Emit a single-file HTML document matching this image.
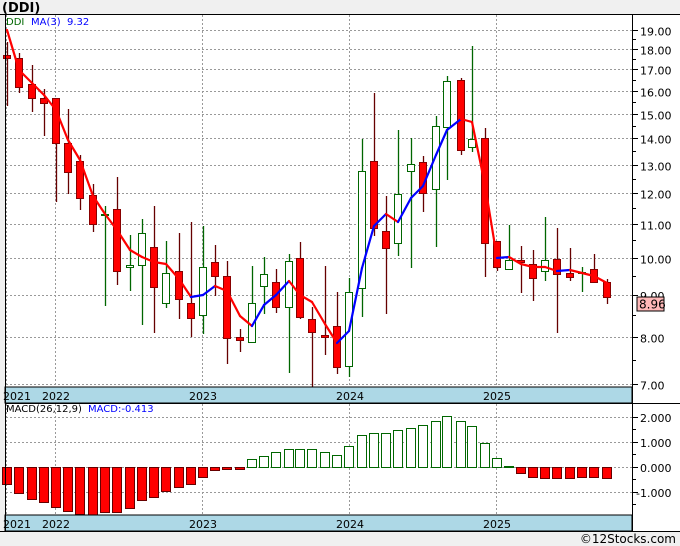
<!DOCTYPE html>
<html><head><meta charset="utf-8"><style>
html,body{margin:0;padding:0;background:#f0f0f0;width:680px;height:546px;overflow:hidden}
svg{display:block}
text{font-family:"DejaVu Sans","Liberation Sans",sans-serif;font-size:11px}
</style></head><body>
<svg id="s" width="680" height="546" xmlns="http://www.w3.org/2000/svg">
<rect x="0" y="0" width="680" height="546" fill="#f0f0f0"/>
<text x="2" y="12" style="font-size:13px;font-weight:bold;font-family:'DejaVu Sans',sans-serif" fill="#000">(DDI)</text>
<rect x="5" y="14" width="675" height="518" fill="#fff"/>
<g id="grid" stroke="#999" stroke-width="1" stroke-dasharray="2,2"></g>
<g id="candles"></g>
<g id="ma" fill="none" stroke-width="2.2"></g>
<g id="macd"></g>
<rect x="5" y="387" width="627" height="16" fill="#add8e6" stroke="#000"/>
<rect x="5" y="515" width="627" height="16" fill="#add8e6" stroke="#000"/>
<line x1="0" y1="14.5" x2="680" y2="14.5" stroke="#000"/>
<line x1="5" y1="403.5" x2="680" y2="403.5" stroke="#000"/>
<line x1="0" y1="531.5" x2="680" y2="531.5" stroke="#000"/>
<line x1="5.5" y1="14" x2="5.5" y2="532" stroke="#000"/>
<line x1="632.5" y1="14" x2="632.5" y2="532" stroke="#000"/>
<g fill="#000" style="font-size:12px">
<text x="3" y="400">2021</text><text x="42" y="400">2022</text><text x="189" y="400">2023</text><text x="336" y="400">2024</text><text x="483" y="400">2025</text>
<text x="3" y="528">2021</text><text x="42" y="528">2022</text><text x="189" y="528">2023</text><text x="336" y="528">2024</text><text x="483" y="528">2025</text>
</g>
<text x="6" y="25" fill="#060" style="font-size:10px">DDI</text>
<text x="31" y="25" fill="#00f" style="font-size:10px">MA(3)</text>
<text x="67" y="25" fill="#00f" style="font-size:10px">9.32</text>
<text x="6" y="412" fill="#000" style="font-size:10px">MACD(26,12,9)</text>
<text x="88" y="412" fill="#00f" style="font-size:10px">MACD:-0.413</text>
<g id="axis" fill="#000" style="font-size:12px"></g>
<rect x="637" y="297" width="27" height="14" fill="#ffb8b8" stroke="#000"/>
<text x="639" y="308.5" fill="#000" style="font-size:12px">8.96</text>
<text x="676" y="543" text-anchor="end" fill="#000" style="font-size:12px">©12Stocks.com</text>
</svg>
<script>
var NS="http://www.w3.org/2000/svg";
function el(p,t,a){var e=document.createElementNS(NS,t);for(var k in a)e.setAttribute(k,a[k]);document.getElementById(p).appendChild(e);return e;}
function py(p){return 30+(Math.log(19)-Math.log(p))*354.7;}
// price grid + axis
for(var p=7;p<=19;p++){var y=Math.round(py(p))+0.5;
 el('grid','line',{x1:6,y1:y,x2:632,y2:y});
 el('axis','line',{x1:632,y1:y,x2:638,y2:y,stroke:'#000'});
 if(p!=9){var t=el('axis','text',{x:640,y:y+5});t.textContent=p.toFixed(2);}
 var ym=Math.round(py(p+0.5))+0.5; if(p<19) el('axis','line',{x1:632,y1:ym,x2:636,y2:ym,stroke:'#000'});
}
var t9=el('axis','text',{x:640,y:Math.round(py(9))+5});t9.textContent='9.00';
// macd grid
[417,442,467,492].forEach(function(y,i){el('grid','line',{x1:6,y1:y+.5,x2:632,y2:y+.5});
 el('axis','line',{x1:632,y1:y+.5,x2:638,y2:y+.5,stroke:'#000'});
 var t=el('axis','text',{x:i==3?636:640,y:y+5});t.textContent=['2.000','1.000','0.000','-1.000'][i];});
[429,454,479,504].forEach(function(y){el('axis','line',{x1:632,y1:y+.5,x2:636,y2:y+.5,stroke:'#000'});});
[6,55,202,349,496].forEach(function(x){el('grid','line',{x1:x+.5,y1:15,x2:x+.5,y2:387});el('grid','line',{x1:x+.5,y1:404,x2:x+.5,y2:515});});
// candles: x, bodyTop, bodyBot, wickTop, wickBot, green?
var C=[[7,55,58,42,106,0],[19,58,87,53,93,0],[32,84,98,65,112,0],[44,98,103,89,136,0],[56,98,143,98,202,0],[68,143,172,109,194,0],[80,161,198,155,210,0],[93,195,224,184,232,0],[105,214,215,206,306,1],[117,209,271,177,285,0],[130,265,267,235,291,1],[142,233,265,219,325,1],[154,247,287,206,333,0],[166,273,303,241,308,1],[179,271,299,233,319,0],[191,303,318,222,337,0],[203,267,315,226,334,1],[215,262,276,245,296,0],[227,276,338,261,364,0],[240,337,340,329,352,0],[252,303,342,266,342,1],[264,274,286,257,314,1],[276,282,307,269,313,0],[289,261,307,254,373,1],[300,258,317,242,319,0],[312,319,332,307,387,0],[325,335,337,266,355,0],[337,326,367,292,374,0],[349,292,366,278,377,1],[362,171,288,139,317,1],[374,161,228,93,236,0],[386,231,248,196,314,0],[398,194,243,130,256,1],[411,164,171,138,268,1],[423,162,193,156,212,0],[436,126,189,116,247,1],[447,81,127,76,180,1],[461,80,150,78,155,0],[472,139,147,46,152,1],[485,138,243,128,277,0],[497,241,267,241,271,0],[509,260,269,225,269,1],[521,260,262,246,293,0],[533,264,278,250,301,0],[545,260,271,217,281,1],[557,259,274,228,333,0],[570,273,277,248,281,0],[582,272,273,267,292,1],[594,269,282,254,282,0],[607,282,297,279,304,0]];
C.forEach(function(c){var col=c[5]?'#060':'#600';
 el('candles','line',{x1:c[0]+.5,y1:c[3],x2:c[0]+.5,y2:c[4],stroke:c[5]?'#060':'#600','stroke-width':1.3});
 var h=Math.max(1,c[2]-c[1]);
 el('candles','rect',{x:c[0]-3.5,y:c[1]+.5,width:7,height:h,fill:c[5]?'#fff':'#f00',stroke:c[5]?'#060':'#800'});
});
var M=[30,70,83,95,110,140,160,196,214,230,250,257,262,264,279,297,295,286,291,316,326,305,295,281,295,302,324,343,331,268,226,214,222,198,186,155,130,119,122,185,258,257,264,267,267,271,270,273,276,283];
for(var i=1;i<M.length;i++){el('ma','line',{x1:C[i-1][0],y1:M[i-1],x2:C[i][0],y2:M[i],stroke:M[i]<M[i-1]?'#00f':'#f00','stroke-linecap':'round'});}
// macd bars (y end; zero 467)
var B=[484,493,499,502,507,511,514,515,512,512,508,500,497,491,487,484,477,470,469,469,459,456,452,449,449,449,452,455,446,435,433,433,430,428,425,421,416,421,426,443,458,466,473,477,478,478,478,477,477,478];
B.forEach(function(b,i){var x=C[i][0];var up=b<467;
 el('macd','rect',{x:x-4.5,y:up?b+.5:467.5,width:9,height:Math.max(1,Math.abs(b-467)),fill:up?'#fff':'#f00',stroke:up?'#060':'#600'});});
</script>
</body></html>
